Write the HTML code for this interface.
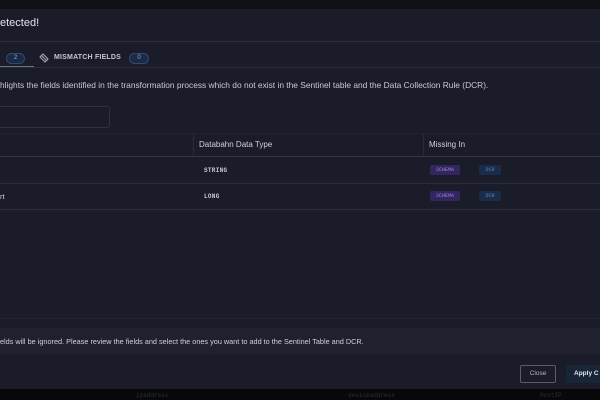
<!DOCTYPE html>
<html><head><style>
*{margin:0;padding:0;box-sizing:border-box}
body{width:600px;height:400px;overflow:hidden;background:#08080b;font-family:"Liberation Sans",sans-serif;position:relative;color:#d8d9e0}
.top{position:absolute;left:0;top:0;width:600px;height:9px;background:#101117}
.modal{position:absolute;left:0;top:9px;width:600px;height:380px;background:#1b1c29}
.a{position:absolute;white-space:nowrap}
.hl{position:absolute;left:0;width:600px;height:1px;background:#2c2d3b}
.mono{font-family:"Liberation Mono",monospace;font-size:6px;font-weight:bold;color:#c8c9d0;letter-spacing:.3px}
.tag{position:absolute;height:10px;font-family:"Liberation Mono",monospace;font-size:5px;line-height:10px;text-align:center;border-radius:2px}
.sch{background:#33265c;color:#9a7ff0;width:30px}
.dcr{background:#1a2c47;color:#4d86cf;width:22px}
</style></head><body>
<div class="top"></div>
<div class="modal"></div>
<div class="a" style="left:0;top:17px;font-size:11px;color:#e2e3ea">etected!</div>
<div class="hl" style="top:41px"></div>
<div class="a" style="left:6px;top:53px;width:19px;height:11px;border:1px solid #2f4a78;border-radius:6px;background:#1c2a44;font-size:6px;color:#8fb0e0;text-align:center;line-height:9px">2</div>
<div style="position:absolute;left:0;top:66px;width:34px;height:2px;background:#6b6f82"></div>
<svg class="a" style="left:39px;top:53px" width="10" height="10" viewBox="0 0 10 10"><path d="M1 4 L4 1 L9 6 L6 9 Z M2 2 L8 8" stroke="#a8a9b5" stroke-width="1" fill="none"/></svg>
<div class="a" style="left:54px;top:54px;font-size:7px;font-weight:bold;color:#c5c6d0;letter-spacing:.2px">MISMATCH FIELDS</div>
<div class="a" style="left:129px;top:53px;width:20px;height:11px;border:1px solid #2f4a78;border-radius:6px;background:#1c2a44;font-size:6px;color:#8fb0e0;text-align:center;line-height:9px">0</div>
<div class="hl" style="top:67px"></div>
<div class="a" style="left:0;top:80px;font-size:8.4px;color:#c8c9d2">hlights the fields identified in the transformation process which do not exist in the Sentinel table and the Data Collection Rule (DCR).</div>
<div class="a" style="left:-5px;top:106px;width:115px;height:22px;border:1px solid #2f3040;border-radius:3px"></div>
<div class="hl" style="top:133px;background:#232432"></div>
<div class="hl" style="top:156px;background:#343545"></div>
<div class="a" style="left:193px;top:134px;width:1px;height:22px;background:#2a2b39"></div>
<div class="a" style="left:423px;top:134px;width:1px;height:22px;background:#2a2b39"></div>
<div class="a" style="left:199px;top:140px;font-size:8px;color:#d0d1da">Databahn Data Type</div>
<div class="a" style="left:429px;top:140px;font-size:8px;color:#d0d1da">Missing In</div>
<div class="a mono" style="left:204px;top:167px">STRING</div>
<div class="tag sch" style="left:430px;top:165px">SCHEMA</div>
<div class="tag dcr" style="left:479px;top:165px">DCR</div>
<div class="hl" style="top:183px"></div>
<div class="a" style="left:0;top:192px;font-size:7.5px;color:#d0d1da">rt</div>
<div class="a mono" style="left:204px;top:193px">LONG</div>
<div class="tag sch" style="left:430px;top:191px">SCHEMA</div>
<div class="tag dcr" style="left:479px;top:191px">DCR</div>
<div class="hl" style="top:209px"></div>
<div class="hl" style="top:318px;background:#232432"></div>
<div class="a" style="left:0;top:328px;width:600px;height:27px;background:#20212e"></div>
<div class="a" style="left:0;top:337px;font-size:7.3px;color:#d0d1da">elds will be ignored. Please review the fields and select the ones you want to add to the Sentinel Table and DCR.</div>
<div class="a" style="left:520px;top:365px;width:36px;height:18px;border:1px solid #5a5c6a;border-radius:2px;font-size:6.5px;color:#b5b6c0;text-align:center;line-height:16px">Close</div>
<div class="a" style="left:566px;top:365px;width:40px;height:18px;background:#182537;border-radius:2px;font-size:6.5px;color:#e0e4ee;line-height:18px;padding-left:8px;font-weight:bold">Apply C</div>
<div class="a" style="left:136px;top:392px;font-size:6px;color:#2c2d33;font-family:'Liberation Mono',monospace">ipaddress</div>
<div class="a" style="left:348px;top:392px;font-size:6px;color:#2c2d33;font-family:'Liberation Mono',monospace">deviceaddress</div>
<div class="a" style="left:540px;top:392px;font-size:6px;color:#2c2d33;font-family:'Liberation Mono',monospace">HostIP</div>
</body></html>
